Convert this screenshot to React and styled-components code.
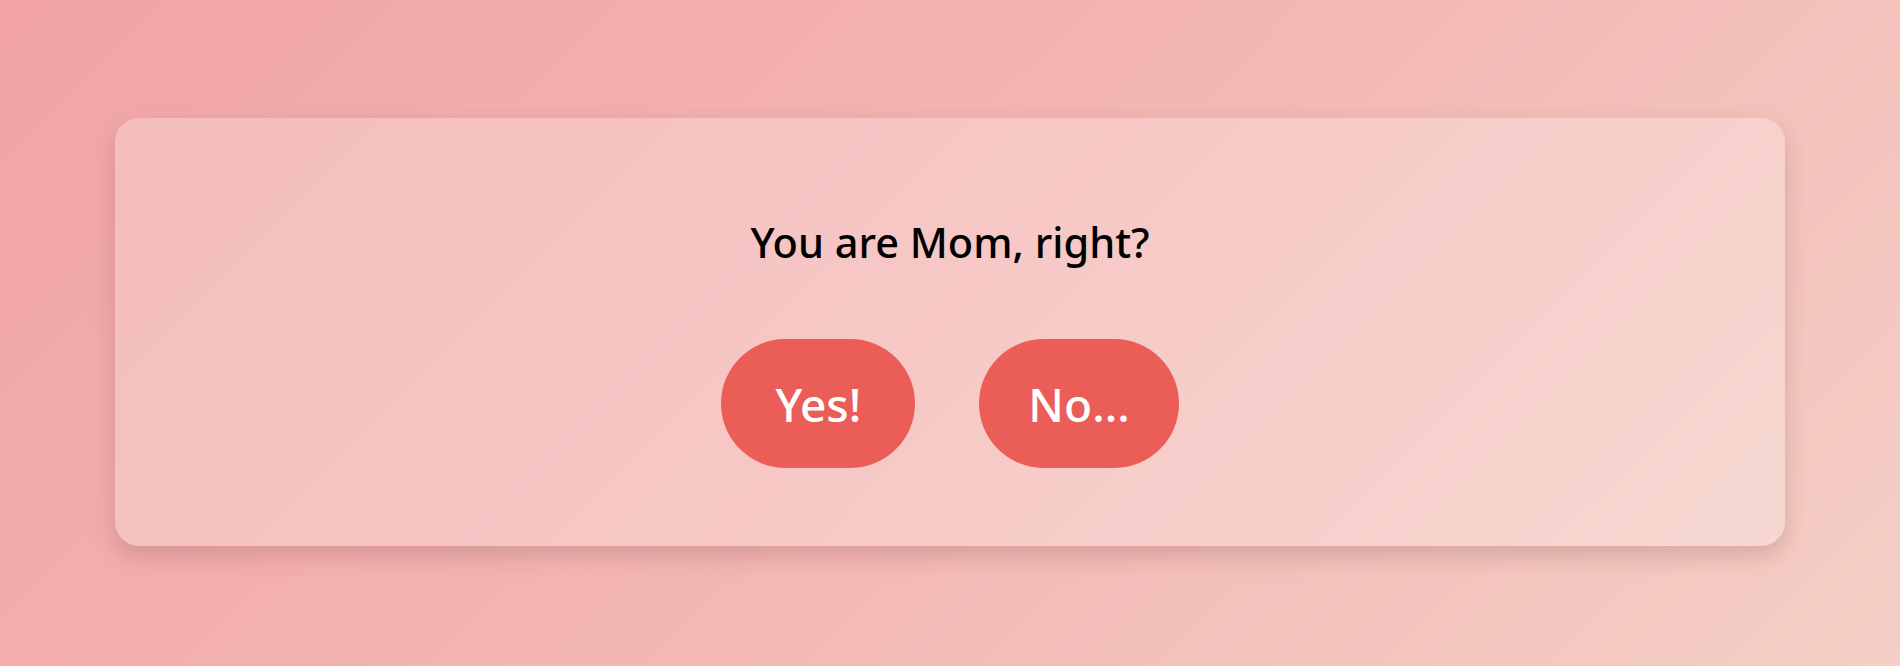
import React from "react";
import styled, { createGlobalStyle } from "styled-components";

const Global = createGlobalStyle`
  html, body { margin: 0; padding: 0; }
  body {
    min-height: 666px;
    background: linear-gradient(135deg, #f1a3a5 0%, #f3b6b3 50%, #f4cfc5 100%);
    font-family: "Comic Sans MS", "Noto Sans", sans-serif;
  }
`;

const Page = styled.div`
  height: 666px;
  display: flex;
  justify-content: center;
  padding-top: 118px;
  box-sizing: border-box;
`;

const Card = styled.div`
  width: 1670px;
  height: 428px;
  box-sizing: border-box;
  border-radius: 24px;
  background: rgba(255, 255, 255, 0.25);
  box-shadow: 0 10px 22px rgba(120, 60, 60, 0.22);
  display: flex;
  flex-direction: column;
  align-items: center;
  padding-top: 100px;
`;

const Title = styled.h1`
  margin: 0;
  font-size: 41.5px;
  line-height: 48px;
  font-weight: 500;
  color: #000;
`;

const Buttons = styled.div`
  display: flex;
  gap: 64px;
  margin-top: 73px;
`;

const Button = styled.button`
  height: 129px;
  min-width: 194px;
  padding: 0 49px;
  border: none;
  border-radius: 65px;
  background: #eb5e58;
  color: #fff;
  font-family: inherit;
  font-size: 46px;
  font-weight: 500;
  cursor: pointer;
`;

export default function App() {
  return (
    <>
      <Global />
      <Page>
        <Card>
          <Title>You are Mom, right?</Title>
          <Buttons>
            <Button>Yes!</Button>
            <Button>No...</Button>
          </Buttons>
        </Card>
      </Page>
    </>
  );
}
